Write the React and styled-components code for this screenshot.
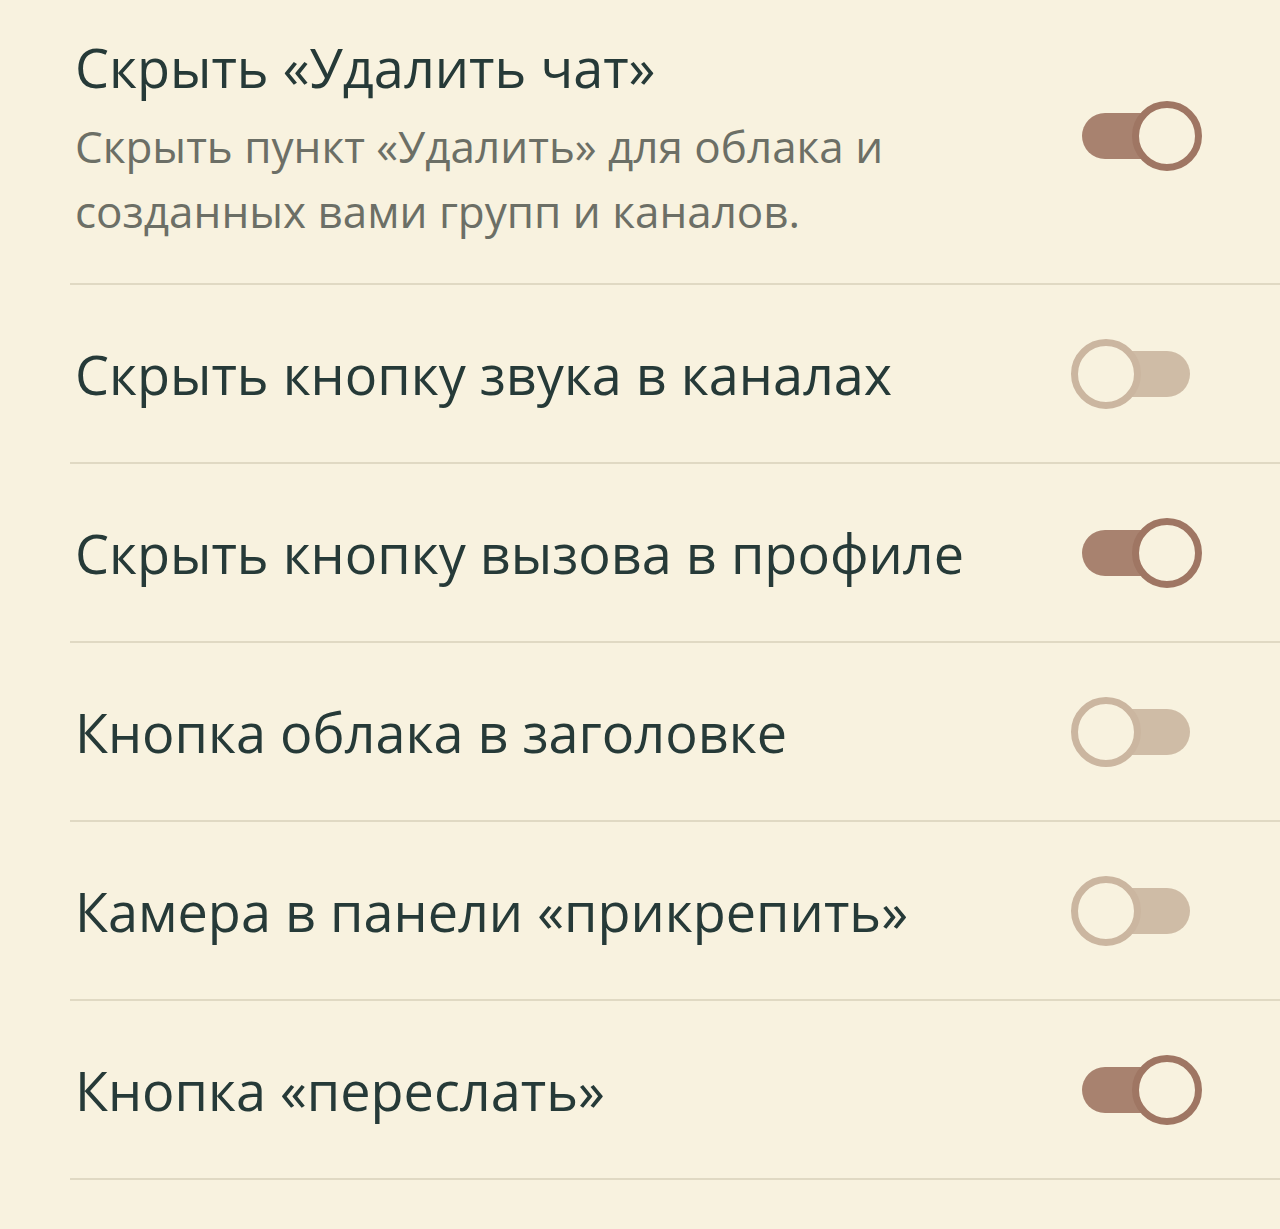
import React from 'react';
import styled, { createGlobalStyle } from 'styled-components';

const GlobalStyle = createGlobalStyle`
  html, body {
    margin: 0;
    padding: 0;
    background: #f8f2df;
  }
  body {
    font-family: "Open Sans", "Noto Sans", sans-serif;
  }
`;

const items = [
  {
    title: 'Скрыть «Удалить чат»',
    description: 'Скрыть пункт «Удалить» для облака и созданных вами групп и каналов.',
    on: true,
  },
  { title: 'Скрыть кнопку звука в каналах', on: false },
  { title: 'Скрыть кнопку вызова в профиле', on: true },
  { title: 'Кнопка облака в заголовке', on: false },
  { title: 'Камера в панели «прикрепить»', on: false },
  { title: 'Кнопка «переслать»', on: true },
];

function Toggle({ on, tall }) {
  return (
    <Switch tall={tall}>
      <Track on={on} />
      <Thumb on={on} />
    </Switch>
  );
}

function App() {
  return (
    <>
      <GlobalStyle />
      <Page>
        {items.map((item) => (
          <Row key={item.title} tall={!!item.description}>
            <Texts>
              <Title>{item.title}</Title>
              {item.description && <Description>{item.description}</Description>}
            </Texts>
            <Toggle on={item.on} tall={!!item.description} />
          </Row>
        ))}
      </Page>
    </>
  );
}

const Page = styled.div`
  width: 1280px;
  min-height: 1229px;
  background: #f8f2df;
  overflow: hidden;
`;

const Row = styled.div`
  display: flex;
  align-items: center;
  justify-content: space-between;
  margin-left: 70px;
  padding: ${({ tall }) => (tall ? '0 78px 6px 5px' : '0 78px 0 5px')};
  height: ${({ tall }) => (tall ? '277px' : '177px')};
  border-bottom: 2px solid #e0d9c3;
  box-sizing: content-box;
`;

const Texts = styled.div`
  display: flex;
  flex-direction: column;
  min-width: 0;
`;

const Title = styled.div`
  font-size: 54px;
  line-height: 66px;
  color: #263a38;
  white-space: nowrap;
`;

const Description = styled.div`
  margin-top: 14px;
  font-size: 44px;
  line-height: 65px;
  color: #6c6f66;
  max-width: 820px;
`;

const Switch = styled.div`
  position: relative;
  width: 131px;
  height: 70px;
  flex-shrink: 0;
  margin-top: ${({ tall }) => (tall ? '-6px' : '0')};
`;

const Track = styled.div`
  position: absolute;
  left: 11px;
  top: 12px;
  width: 108px;
  height: 46px;
  border-radius: 23px;
  background: ${({ on }) => (on ? '#a8826f' : '#cfbca6')};
`;

const Thumb = styled.div`
  position: absolute;
  top: 0;
  left: ${({ on }) => (on ? '61px' : '0')};
  width: 70px;
  height: 70px;
  box-sizing: border-box;
  border-radius: 50%;
  border: 7px solid ${({ on }) => (on ? '#9f7663' : '#cbb6a0')};
  background: #f8f2df;
`;

export default App;
